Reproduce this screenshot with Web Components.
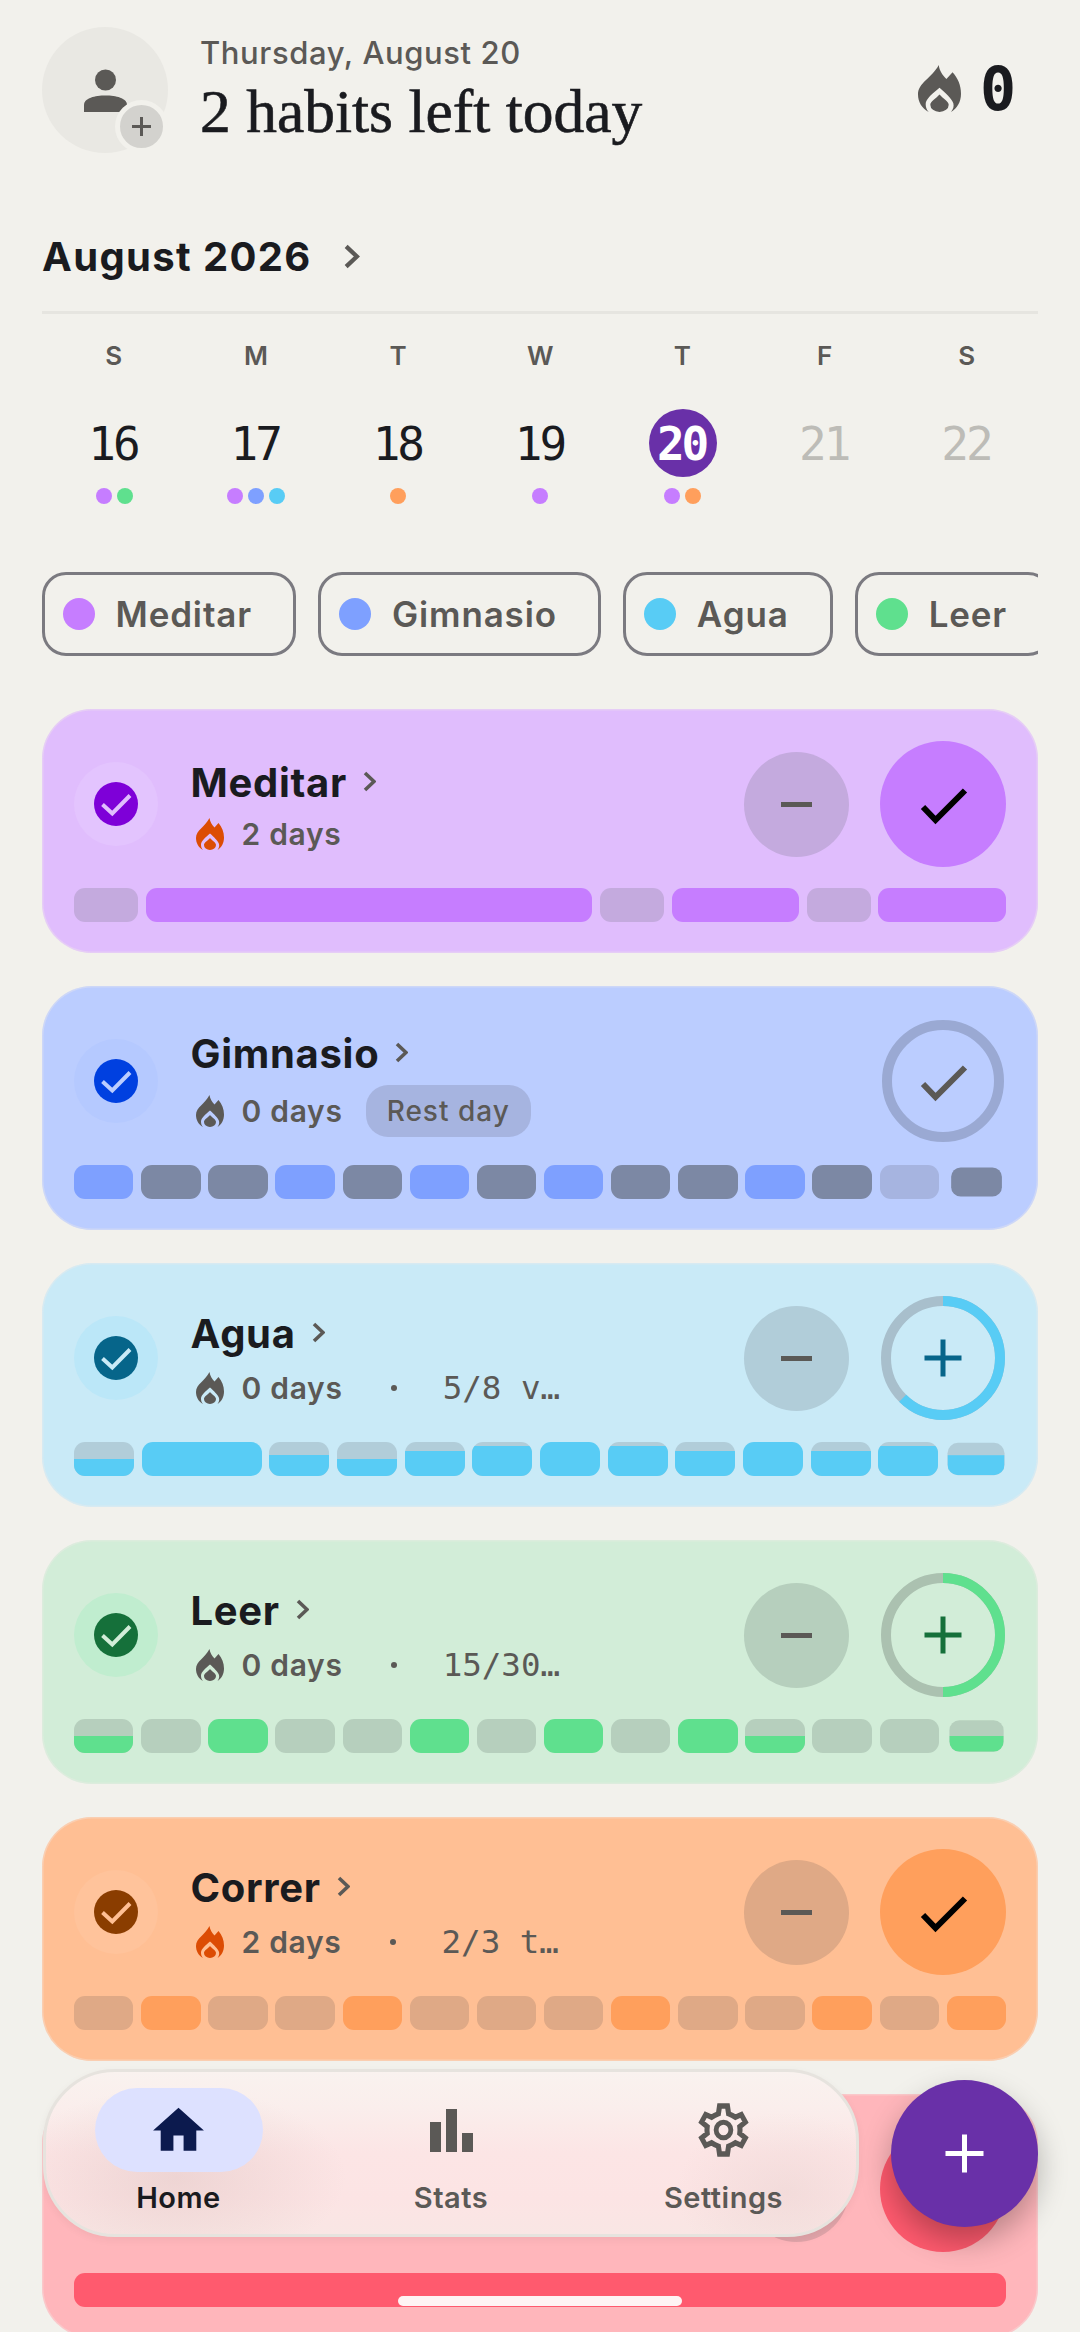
<!DOCTYPE html>
<html lang="en">
<head>
<meta charset="utf-8">
<title>Habits</title>
<style>
  html, body { margin: 0; background: #f2f1ec; }
  body { width: 1080px; height: 2332px; overflow: hidden; }
</style>
</head>
<body>
<habit-app>
  <app-header date="Thursday, August 20" streak="0">2 habits left today</app-header>
  <month-bar>August 2026</month-bar>
  <week-strip></week-strip>
  <chip-row>
    <filter-chip color="#c67dff">Meditar</filter-chip>
    <filter-chip color="#7ea0ff">Gimnasio</filter-chip>
    <filter-chip color="#58ccf5">Agua</filter-chip>
    <filter-chip color="#5fe08e">Leer</filter-chip>
  </chip-row>
  <habit-list>
    <habit-card theme="purple" streak="2" action="done" cells="1:0,7:1,1:0,2:1,1:0,2:1">Meditar</habit-card>
    <habit-card theme="blue" streak="0" action="rest" badge="Rest day" last-scale=".86"
      cells="1:1,1:0,1:0,1:1,1:0,1:1,1:0,1:1,1:0,1:0,1:1,1:0,1:r,1:0">Gimnasio</habit-card>
    <habit-card theme="cyan" streak="0" action="progress" pct="62.5" metric="5/8 v…" last-scale=".95"
      cells="1:.5,2:1,1:.625,1:.5,1:.75,1:.875,1:1,1:.875,1:.75,1:1,1:.75,1:.875,1:.625">Agua</habit-card>
    <habit-card theme="green" streak="0" action="progress" pct="50" metric="15/30…" last-scale=".92"
      cells="1:.5,1:0,1:1,1:0,1:0,1:1,1:0,1:1,1:0,1:1,1:.5,1:0,1:0,1:.5">Leer</habit-card>
    <habit-card theme="orange" streak="2" action="done" metric="2/3 t…"
      cells="1:0,1:1,1:0,1:0,1:1,1:0,1:0,1:0,1:1,1:0,1:0,1:1,1:0,1:1">Correr</habit-card>
    <habit-card theme="red" action="done" cells="14:1"></habit-card>
  </habit-list>
  <bottom-nav></bottom-nav>
  <add-button></add-button>
  <home-indicator></home-indicator>
</habit-app>

<script>
// Shared icons
const FLAME = `<path fill="currentColor" d="M13.5 0C14 4 16 7 18.5 9.5L22.5 5C26 9 28 14 28 19.5C28 25 25.5 29.5 21.5 32C23 30 23.5 28 23 26C22 23 18 19 14 15.5C10 19 5 23 5 26.5C5 28.5 5.5 30.5 7 32C2.5 29.5 0 25 0 20C0 12 9 9 13.5 0ZM14 20C16 22.5 20 24.5 20 27A6 5 0 0 1 8 27C8 24.5 12 22.5 14 20Z"/>`;
const CHEVRON = `<path d="M2 2l9 8.5-9 8.5" fill="none" stroke="currentColor" stroke-width="3.6"/>`;

const THEMES = {
  purple: { bg: '#e0bdfd', halo: '#e3c4fe', ink: '#7e00d8', on: '#c67dff', off: '#c4aade', track: '#c4aade' },
  blue:   { bg: '#bbcdff', halo: '#b5c9ff', ink: '#0040e0', on: '#7ea0ff', off: '#7c88a4', track: '#9aa9d3', rest: '#a6b4e0' },
  cyan:   { bg: '#c9eaf7', halo: '#bbe7f8', ink: '#06658a', on: '#58ccf5', off: '#b1cdd9', track: '#a8bfcc' },
  green:  { bg: '#d2edd8', halo: '#c0edcf', ink: '#15703a', on: '#5fe08e', off: '#b6cfbd', track: '#abc1b0' },
  orange: { bg: '#ffbf94', halo: '#ffc39b', ink: '#8a3d00', on: '#ff9f5c', off: '#dfa986', track: '#dfa986' },
  red:    { bg: '#ffb6bb', halo: '#ffc2c6', ink: '#b00020', on: '#ff5a6e', off: '#dfa3a8', track: '#dfa3a8' }
};

/**
 * Page frame, everything flows inside it.
 */
class HabitApp extends HTMLElement {
  constructor() {
    super();
    this.attachShadow({ mode: 'open' });
    this.shadowRoot.innerHTML = `
      <style>
        :host {
          display: flex;
          flex-direction: column;
          position: relative;
          box-sizing: border-box;
          width: 1080px;
          height: 2332px;
          padding: 27px 42px 0;
          overflow: hidden;
          background: #f2f1ec;
          font-family: Inter, "Liberation Sans", sans-serif;
        }
      </style>
      <slot></slot>
    `;
  }
}

/**
 * Avatar, date, title and the overall streak.
 */
class AppHeader extends HTMLElement {
  constructor() {
    super();
    this.attachShadow({ mode: 'open' });
    this.shadowRoot.innerHTML = `
      <style>
        :host {
          display: flex;
          align-items: flex-start;
          flex: none;
          height: 126px;
        }
        .avatar {
          position: relative;
          flex: none;
          width: 126px;
          height: 126px;
          border-radius: 50%;
          background: #e9e8e3;
        }
        .avatar svg { display: block; }
        .badge {
          position: absolute;
          left: 73px;
          top: 73px;
          box-sizing: border-box;
          width: 53px;
          height: 53px;
          border: 5px solid #f2f1ec;
          border-radius: 50%;
          background: #d3d2ce;
        }
        .text { flex: 1; margin-left: 32px; }
        .date {
          margin-top: 4px;
          font-size: 31px;
          line-height: 44px;
          font-weight: 500;
          letter-spacing: .6px;
          color: #5b5956;
        }
        .title {
          margin-top: 4px;
          font-family: "Liberation Serif", serif;
          font-size: 61.500px;
          line-height: 64px;
          color: #1a1b1f;
          -webkit-text-stroke: .6px #1a1b1f;
        }
        .streak {
          display: flex;
          align-items: center;
          gap: 19px;
          height: 47px;
          margin: 38px 22px 0 0;
          font-family: "DejaVu Sans Mono", monospace;
          font-size: 60px;
          font-weight: 700;
          color: #1a1b1f;
        }
        .streak svg { color: #5b5956; }
      </style>
      <div class="avatar">
        <svg width="126" height="126" viewBox="0 0 126 126">
          <circle cx="63.5" cy="53" r="10.5" fill="#5b5956"/>
          <path d="M42 85v-7c0-7 11-9.500 21.500-9.500S85 71 85 78v7z" fill="#5b5956"/>
        </svg>
        <div class="badge">
          <svg width="43" height="43" viewBox="0 0 43 43">
            <path d="M12 21.500h19M21.500 12v19" stroke="#5b5956" stroke-width="3"/>
          </svg>
        </div>
      </div>
      <div class="text">
        <div class="date">${this.getAttribute('date')}</div>
        <div class="title"><slot></slot></div>
      </div>
      <div class="streak">
        <svg width="43" height="47" viewBox="0 0 28 32" preserveAspectRatio="none">${FLAME}</svg>
        <span>${this.getAttribute('streak')}</span>
      </div>
    `;
  }
}

/**
 * Month title with its chevron and the rule under it.
 */
class MonthBar extends HTMLElement {
  constructor() {
    super();
    this.attachShadow({ mode: 'open' });
    this.shadowRoot.innerHTML = `
      <style>
        :host {
          display: flex;
          align-items: center;
          flex: none;
          gap: 31px;
          box-sizing: border-box;
          height: 97px;
          margin-top: 64px;
          padding-bottom: 15px;
          border-bottom: 3px solid #e6e5e0;
          font-size: 40px;
          line-height: 48px;
          font-weight: 700;
          letter-spacing: 1.350px;
          color: #1a1b1f;
        }
        svg { color: #5b5956; }
      </style>
      <span><slot></slot></span>
      <svg width="17" height="25" viewBox="0 0 13 21">${CHEVRON}</svg>
    `;
  }
}

/**
 * One week of days with the coloured habit dots.
 */
class WeekStrip extends HTMLElement {
  constructor() {
    super();
    this.attachShadow({ mode: 'open' });
    const days = [
      ['S', 16, ['#c67dff', '#5fe08e']],
      ['M', 17, ['#c67dff', '#7ea0ff', '#58ccf5']],
      ['T', 18, ['#ff9f5c']],
      ['W', 19, ['#c67dff']],
      ['T', 20, ['#c67dff', '#ff9f5c'], 'today'],
      ['F', 21, [], 'future'],
      ['S', 22, [], 'future']
    ];
    const cols = days.map(([letter, num, dots, state = '']) => `
      <div class="day ${state}">
        <div class="letter">${letter}</div>
        <div class="num"><span>${num}</span></div>
        <div class="dots">${dots.map(c => `<i style="background:${c}"></i>`).join('')}</div>
      </div>
    `).join('');
    this.shadowRoot.innerHTML = `
      <style>
        :host {
          display: grid;
          grid-template-columns: repeat(7, 1fr);
          flex: none;
          padding: 28px 0 0 1px;
        }
        .day {
          display: flex;
          flex-direction: column;
          align-items: center;
        }
        .letter {
          font-size: 26px;
          line-height: 28px;
          font-weight: 600;
          letter-spacing: .5px;
          color: #5b5956;
        }
        .num {
          display: flex;
          align-items: center;
          justify-content: center;
          width: 68px;
          height: 68px;
          margin-top: 39px;
          border-radius: 50%;
          font-family: "DejaVu Sans Mono", monospace;
          font-size: 46px;
          letter-spacing: -3px;
          color: #1a1b1f;
        }
        .num span { margin: 2px 0 0 -2px; }
        .today .num { background: #6930a8; color: #fff; font-weight: 700; }
        .future .num { color: #bdbcb7; }
        .dots {
          display: flex;
          gap: 5px;
          height: 16px;
          margin-top: 11px;
        }
        .dots i { width: 16px; height: 16px; border-radius: 50%; }
      </style>
      ${cols}
    `;
  }
}

/**
 * Horizontal, clipped row of filter chips.
 */
class ChipRow extends HTMLElement {
  constructor() {
    super();
    this.attachShadow({ mode: 'open' });
    this.shadowRoot.innerHTML = `
      <style>
        :host {
          display: flex;
          flex: none;
          gap: 22px;
          margin-top: 68px;
          overflow: hidden;
        }
      </style>
      <slot></slot>
    `;
  }
}

class FilterChip extends HTMLElement {
  constructor() {
    super();
    this.attachShadow({ mode: 'open' });
    this.shadowRoot.innerHTML = `
      <style>
        :host {
          display: flex;
          align-items: center;
          flex: none;
          gap: 21px;
          box-sizing: border-box;
          height: 84px;
          padding: 0 41.500px 0 17.500px;
          border: 3px solid #7b7a80;
          border-radius: 24px;
          font-size: 35px;
          font-weight: 600;
          letter-spacing: .85px;
          color: #5b5956;
        }
        i { width: 32px; height: 32px; border-radius: 50%; background: ${this.getAttribute('color')}; }
      </style>
      <i></i><span><slot></slot></span>
    `;
  }
}

class HabitList extends HTMLElement {
  constructor() {
    super();
    this.attachShadow({ mode: 'open' });
    this.shadowRoot.innerHTML = `
      <style>
        :host {
          display: flex;
          flex-direction: column;
          flex: none;
          gap: 33px;
          margin-top: 53px;
        }
      </style>
      <slot></slot>
    `;
  }
}

/**
 * A habit: check ring, name, streak line, actions and the history bar.
 */
class HabitCard extends HTMLElement {
  constructor() {
    super();
    this.attachShadow({ mode: 'open' });
    const t = THEMES[this.getAttribute('theme')];
    const action = this.getAttribute('action');
    const metric = this.getAttribute('metric');
    const badge = this.getAttribute('badge');
    const streak = this.getAttribute('streak');
    const pct = Number(this.getAttribute('pct') || 0);

    let sub = '';
    if (streak !== null) {
      sub = `
        <div class="sub ${metric ? 'has-metric' : ''} ${badge ? 'has-badge' : ''}">
          <svg class="flame" style="color:${streak === '0' ? '#5b5956' : '#dc4c04'}" width="28" height="32" viewBox="0 0 28 32">${FLAME}</svg>
          <span class="days">${streak} days</span>
          ${badge ? `<span class="badge">${badge}</span>` : ''}
          ${metric ? `<i class="sep"></i><span class="metric">${metric}</span>` : ''}
        </div>
      `;
    }

    let main = '';
    if (action === 'done') {
      main = `<div class="main" style="background:${t.on}">
        <svg width="126" height="126" viewBox="0 0 126 126"><path d="M43 66l12.500 13L85 49.500" fill="none" stroke="#000" stroke-width="6"/></svg>
      </div>`;
    } else if (action === 'rest') {
      main = `<div class="main">
        <svg width="126" height="126" viewBox="0 0 126 126">
          <circle cx="63" cy="63" r="56" fill="none" stroke="${t.track}" stroke-width="10"/>
          <path d="M43 66l12.500 13L85 49.500" fill="none" stroke="#5b5956" stroke-width="6"/>
        </svg>
      </div>`;
    } else {
      main = `<div class="main">
        <svg width="126" height="126" viewBox="0 0 126 126">
          <circle cx="63" cy="63" r="57" fill="none" stroke="${t.track}" stroke-width="10"/>
          <circle cx="63" cy="63" r="57" fill="none" stroke="${t.on}" stroke-width="10" pathLength="100"
            stroke-dasharray="${pct} 100" transform="rotate(-90 63 63)"/>
          <path d="M44.500 63h37M63 44.500v37" stroke="${t.ink}" stroke-width="5"/>
        </svg>
      </div>`;
    }

    const minus = action === 'rest' ? '' : `
      <div class="minus"><svg width="105" height="105" viewBox="0 0 105 105"><path d="M37 52.500h31" stroke="#5b5956" stroke-width="5"/></svg></div>
    `;

    const parts = this.getAttribute('cells').split(',');
    const scale = this.getAttribute('last-scale');
    const cells = parts.map((part, i) => {
      const [grow, fill] = part.split(':');
      const restDay = fill === 'r';
      const h = restDay ? 0 : Number(fill) * 100;
      const bg = restDay ? t.rest : t.off;
      const tf = i === parts.length - 1 && scale ? `transform:scale(${scale});` : '';
      return `<div class="cell" style="flex:${grow} 1 0;background:${bg};${tf}"><b style="height:${h}%"></b></div>`;
    }).join('');

    this.shadowRoot.innerHTML = `
      <style>
        :host {
          display: block;
          flex: none;
          box-sizing: border-box;
          height: 244px;
          padding: 32px;
          border-radius: 50px;
          background: ${t.bg};
          box-shadow: inset 0 0 0 1.500px rgba(240, 236, 232, .35);
        }
        .top {
          display: flex;
          align-items: center;
          height: 126px;
        }
        .check {
          display: flex;
          align-items: center;
          justify-content: center;
          flex: none;
          width: 84px;
          height: 84px;
          border-radius: 50%;
          background: ${t.halo};
        }
        .check div {
          width: 44px;
          height: 44px;
          border-radius: 50%;
          background: ${t.ink};
        }
        .check svg { display: block; }
        .info {
          display: flex;
          flex-direction: column;
          justify-content: center;
          flex: 1;
          gap: 12px;
          min-width: 0;
          margin-left: 32.500px;
        }
        .name {
          display: flex;
          align-items: center;
          gap: 16px;
          height: 48px;
          font-size: 40px;
          font-weight: 700;
          letter-spacing: .7px;
          color: #1a1b1f;
        }
        .name svg { color: #5b5956; margin-top: -2px; }
        .sub {
          display: flex;
          align-items: center;
          height: 32px;
          font-size: 30px;
          font-weight: 600;
          letter-spacing: .7px;
          color: #5b5956;
        }
        .sub.has-metric { height: 38px; }
        .sub.has-badge { height: 44px; }
        .flame { flex: none; margin: 0 18px 0 5px; }
        .days { white-space: nowrap; }
        .badge {
          display: flex;
          align-items: center;
          flex: none;
          height: 52px;
          margin-left: 23px;
          padding: 0 21px;
          border-radius: 22px;
          background: ${t.rest || t.off};
          font-size: 28px;
          font-weight: 500;
          letter-spacing: 1px;
        }
        .sep {
          flex: none;
          width: 6px;
          height: 6px;
          margin: 0 46px 0 48px;
          border-radius: 50%;
          background: #5b5956;
        }
        .metric {
          font-family: "DejaVu Sans Mono", monospace;
          font-size: 32.500px;
          font-weight: 400;
          letter-spacing: 0;
          white-space: nowrap;
        }
        .actions {
          display: flex;
          align-items: center;
          flex: none;
          gap: 31px;
        }
        .minus {
          width: 105px;
          height: 105px;
          border-radius: 50%;
          background: ${t.off};
        }
        .main {
          width: 126px;
          height: 126px;
          border-radius: 50%;
        }
        .main svg, .minus svg { display: block; }
        .bar {
          display: flex;
          gap: 7.700px;
          height: 34px;
          margin-top: 21px;
        }
        .cell {
          display: flex;
          align-items: flex-end;
          min-width: 0;
          border-radius: 11px;
          overflow: hidden;
        }
        .cell b { display: block; width: 100%; background: ${t.on}; }
      </style>
      <div class="top">
        <div class="check"><div>
          <svg width="44" height="44" viewBox="0 0 44 44"><path d="M8.500 22.500l9.800 9L36 13.500" fill="none" stroke="${t.bg}" stroke-width="4"/></svg>
        </div></div>
        <div class="info">
          <div class="name"><span><slot></slot></span>${this.textContent.trim() ? `<svg width="13" height="21" viewBox="0 0 13 21">${CHEVRON}</svg>` : ''}</div>
          ${sub}
        </div>
        <div class="actions">${minus}${main}</div>
      </div>
      <div class="bar">${cells}</div>
    `;
  }
}

/**
 * Floating tab bar, laid over the list.
 * The frosted look is painted as gradients, backdrop blur left the card showing through sharp.
 */
class BottomNav extends HTMLElement {
  constructor() {
    super();
    this.attachShadow({ mode: 'open' });
    this.shadowRoot.innerHTML = `
      <style>
        :host {
          position: absolute;
          left: 43px;
          top: 2069px;
          display: grid;
          grid-template-columns: repeat(3, 272.500px);
          justify-content: center;
          box-sizing: border-box;
          width: 816px;
          height: 168px;
          padding-top: 16px;
          border: 3px solid #e6e3de;
          border-radius: 72px;
          background:
            radial-gradient(ellipse 170px 90px at 130px 105px, rgba(205, 175, 172, .3), transparent),
            radial-gradient(ellipse 110px 80px at 740px 120px, rgba(205, 185, 180, .2), transparent),
            linear-gradient(180deg, #f9f2ef 0%, #faeeec 22%, #fce5e5 50%, #fce4e4 78%, #f9e6e4 100%);
          box-shadow: 0 3px 8px rgba(0, 0, 0, .05);
        }
        .item {
          display: flex;
          flex-direction: column;
          align-items: center;
          font-size: 29px;
          line-height: 36px;
          font-weight: 600;
          letter-spacing: .5px;
          color: #5b5956;
        }
        .pill {
          display: flex;
          align-items: center;
          justify-content: center;
          width: 168px;
          height: 84px;
          border-radius: 42px;
        }
        .active .pill { background: #dde1ff; color: #0c1a4e; }
        .active { color: #1a1b1f; }
        .item span { margin-top: 8px; }
        svg { display: block; fill: currentColor; }
      </style>
      <div class="item active">
        <div class="pill"><svg width="61" height="61" viewBox="0 0 24 24"><path d="M10 20v-6h4v6h5v-8h3L12 3 2 12h3v8z"/></svg></div>
        <span>Home</span>
      </div>
      <div class="item">
        <div class="pill"><svg width="43" height="43" viewBox="0 0 43 43"><path d="M0 13h11v30H0zM16 0h11v43H16zM32 24h11v19H32z"/></svg></div>
        <span>Stats</span>
      </div>
      <div class="item">
        <div class="pill"><svg width="61" height="64" viewBox="0 0 24 24" preserveAspectRatio="none">
          <path fill="none" stroke="currentColor" stroke-width="2" stroke-miterlimit="6" d="M10.450 3H13.550L14 5.900Q15.500 6.400 16.700 7.200L19 6.200 20.600 9 18.400 10.700Q18.600 12 18.400 13.300L20.600 15 19 17.800 16.700 16.800Q15.500 17.600 14 18.100L13.550 21H10.450L10 18.100Q8.500 17.600 7.300 16.800L5 17.800 3.400 15 5.600 13.300Q5.400 12 5.600 10.700L3.400 9 5 6.200 7.300 7.200Q8.500 6.400 10 5.900Z"/>
          <circle cx="12" cy="12" r="2.900" fill="none" stroke="currentColor" stroke-width="1.900"/>
        </svg></div>
        <span>Settings</span>
      </div>
    `;
  }
}

class AddButton extends HTMLElement {
  constructor() {
    super();
    this.attachShadow({ mode: 'open' });
    this.shadowRoot.innerHTML = `
      <style>
        :host {
          position: absolute;
          left: 891px;
          top: 2080px;
          display: block;
          width: 147px;
          height: 147px;
          border-radius: 50%;
          background: #6930a8;
          box-shadow: 0 14px 30px rgba(0, 0, 0, .28);
        }
        svg { display: block; }
      </style>
      <svg width="147" height="147" viewBox="0 0 147 147"><path d="M54.500 73.500h38M73.500 54.500v38" stroke="#fff" stroke-width="5"/></svg>
    `;
  }
}

class HomeIndicator extends HTMLElement {
  constructor() {
    super();
    this.attachShadow({ mode: 'open' });
    this.shadowRoot.innerHTML = `
      <style>
        :host {
          position: absolute;
          left: 398px;
          top: 2296px;
          display: block;
          width: 284px;
          height: 10px;
          border-radius: 5px;
          background: #fff4f4;
        }
      </style>
    `;
  }
}

customElements.define('habit-app', HabitApp);
customElements.define('app-header', AppHeader);
customElements.define('month-bar', MonthBar);
customElements.define('week-strip', WeekStrip);
customElements.define('chip-row', ChipRow);
customElements.define('filter-chip', FilterChip);
customElements.define('habit-list', HabitList);
customElements.define('habit-card', HabitCard);
customElements.define('bottom-nav', BottomNav);
customElements.define('add-button', AddButton);
customElements.define('home-indicator', HomeIndicator);
</script>
</body>
</html>
